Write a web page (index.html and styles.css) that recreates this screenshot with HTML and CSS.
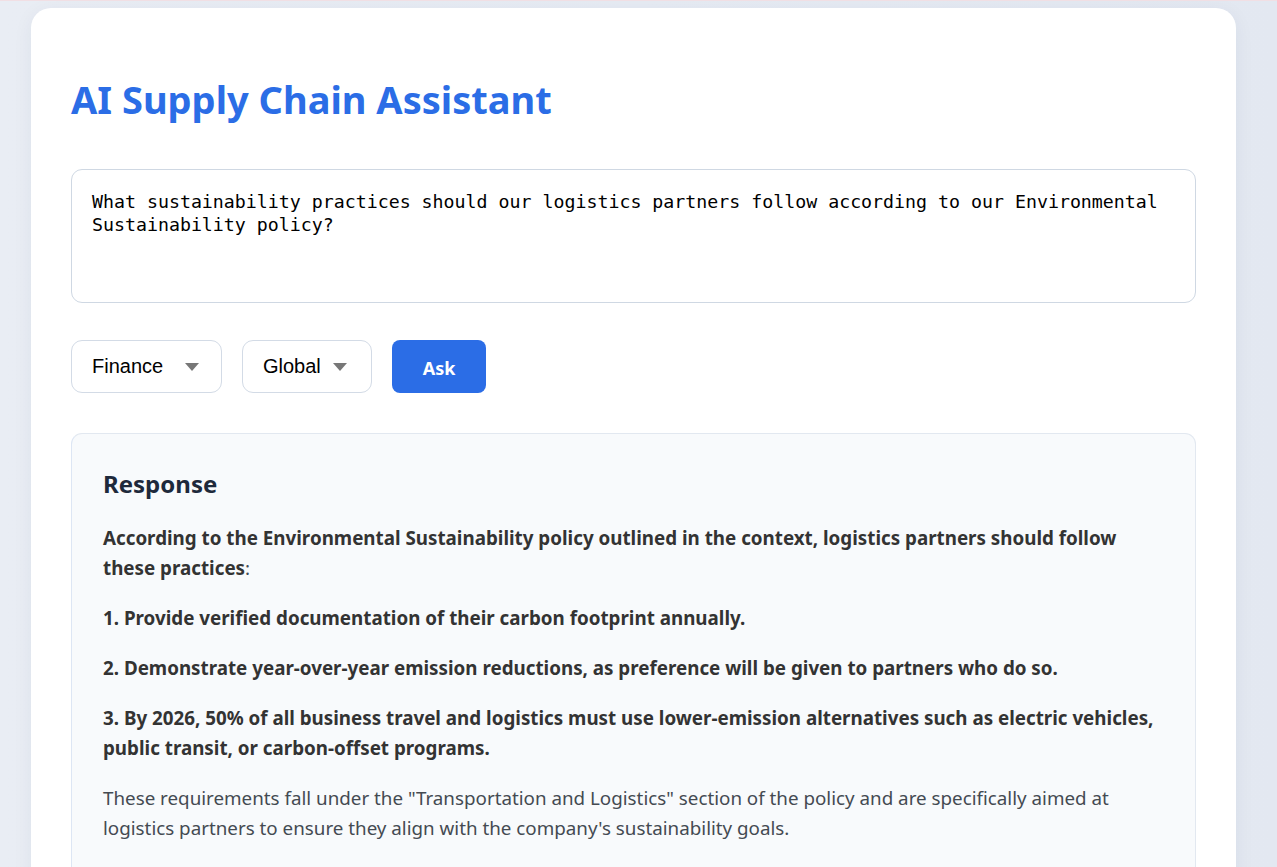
FILE: index.html
```html
<!DOCTYPE html>
<html lang="en">
<head>
<meta charset="utf-8">
<title>AI Supply Chain Assistant</title>
<link rel="stylesheet" href="styles.css">
</head>
<body>
<main class="card">
  <h1 class="title">AI Supply Chain Assistant</h1>
  <textarea class="query">What sustainability practices should our logistics partners follow according to our Environmental Sustainability policy?</textarea>
  <div class="controls">
    <div class="select select-dept"><span>Finance</span><span class="caret"></span></div>
    <div class="select select-region"><span>Global</span><span class="caret"></span></div>
    <button class="ask">Ask</button>
  </div>
  <section class="response">
    <h2 class="response-title">Response</h2>
    <p class="strong"><b>According to the Environmental Sustainability policy outlined in the context, logistics partners should follow these practices</b>:</p>
    <p class="strong"><b>1. Provide verified documentation of their carbon footprint annually.</b></p>
    <p class="strong"><b>2. Demonstrate year-over-year emission reductions, as preference will be given to partners who do so.</b></p>
    <p class="strong"><b>3. By 2026, 50% of all business travel and logistics must use lower-emission alternatives such as electric vehicles, public transit, or carbon-offset programs.</b></p>
    <p>These requirements fall under the "Transportation and Logistics" section of the policy and are specifically aimed at logistics partners to ensure they align with the company's sustainability goals.</p>
  </section>
</main>
</body>
</html>
```

FILE: styles.css
```css
html, body {
  margin: 0;
  padding: 0;
}
body {
  min-height: 867px;
  background: linear-gradient(90deg, #e9edf4 0%, #e6ebf3 50%, #e3e8f1 100%);
  border-top: 1px solid #f1dfe4;
  box-sizing: border-box;
  font-family: "Noto Sans", "Open Sans", sans-serif;
  overflow: hidden;
}
.card {
  margin: 7px 41px 0 31px;
  background: #ffffff;
  border-radius: 20px;
  padding: 40px 40px 40px 40px;
  box-shadow: 0 4px 20px rgba(30, 50, 90, 0.06);
  min-height: 900px;
}
.title {
  margin: 25px 0 0 0;
  font-size: 38px;
  line-height: 52px;
  font-weight: 700;
  color: #2b6de6;
}
.query {
  display: block;
  box-sizing: border-box;
  width: 100%;
  height: 134px;
  margin-top: 44px;
  padding: 20px 20px;
  border: 1px solid #cfd8e3;
  border-radius: 11px;
  font-family: "DejaVu Sans Mono", "Liberation Mono", monospace;
  font-size: 18.25px;
  line-height: 23px;
  color: #000;
  resize: none;
  background: #fff;
}
.controls {
  display: flex;
  gap: 20px;
  margin-top: 37px;
  align-items: center;
}
.select {
  box-sizing: border-box;
  height: 53px;
  border: 1px solid #d3dbe6;
  border-radius: 11px;
  display: flex;
  align-items: center;
  padding: 0 22px 0 20px;
  font-family: "Liberation Sans", Arial, sans-serif;
  font-size: 20px;
  color: #000;
  background: #fff;
}
.select-dept { width: 151px; justify-content: space-between; }
.select-region { width: 130px; gap: 12px; }
.caret {
  width: 0;
  height: 0;
  border-left: 7px solid transparent;
  border-right: 7px solid transparent;
  border-top: 8px solid #777;
  margin-top: 1px;
}
.ask {
  box-sizing: border-box;
  width: 94px;
  height: 53px;
  border: none;
  border-radius: 8px;
  background: #2b6de6;
  color: #fff;
  font-family: "Noto Sans", "Open Sans", sans-serif;
  font-weight: 700;
  font-size: 18px;
  padding: 2px 0 0 0;
}
.response {
  margin-top: 40px;
  background: #f8fafc;
  border: 1px solid #e2e8f0;
  border-left-color: #dde6f4;
  border-radius: 11px;
  padding: 33px 29px 20px 31px;
  min-height: 500px;
}
.response-title {
  margin: 0 0 22px 0;
  font-size: 24px;
  line-height: 34px;
  font-weight: 700;
  color: #1e293b;
}
.response p {
  margin: 0 0 20px 0;
  font-size: 18.8px;
  line-height: 30px;
  color: #444a52;
}
.response p b {
  font-weight: 700;
  color: #333;
}
```
